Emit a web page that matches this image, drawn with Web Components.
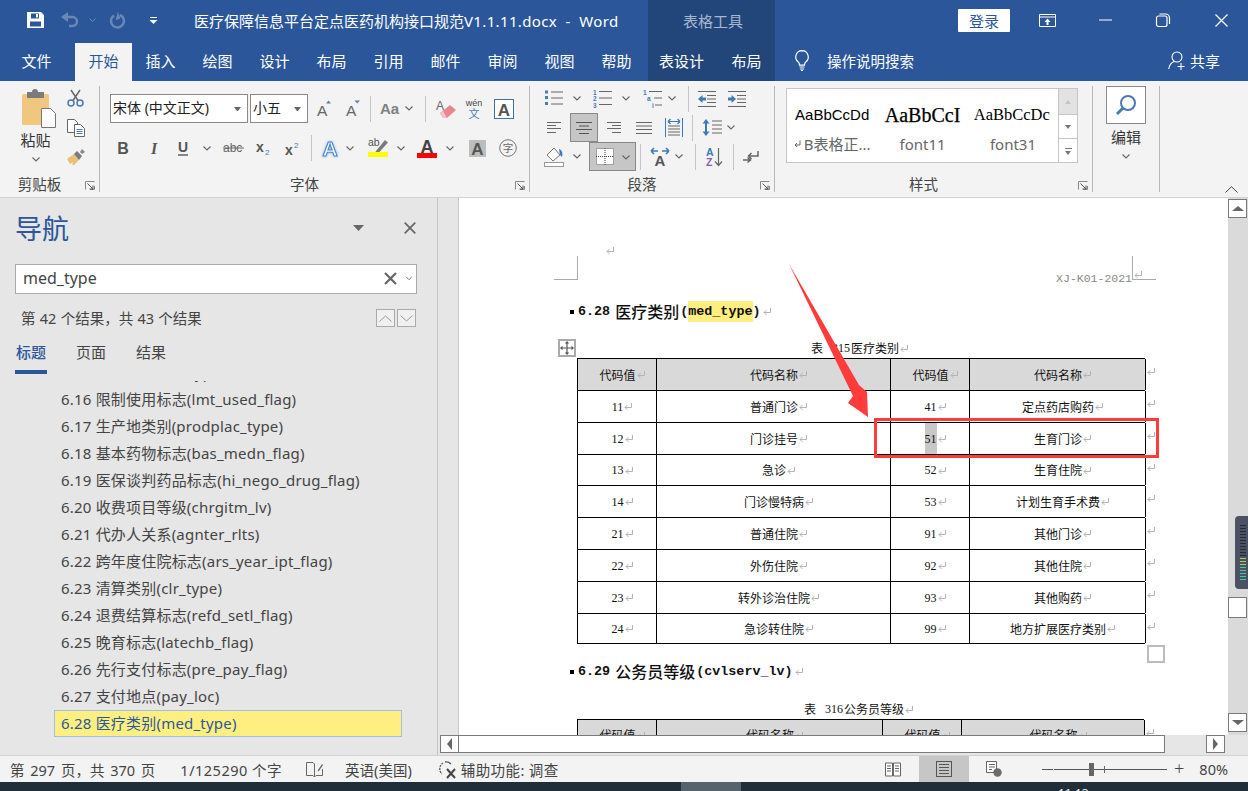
<!DOCTYPE html>
<html lang="zh">
<head>
<meta charset="utf-8">
<title>Word</title>
<style>
  html, body { margin: 0; padding: 0; background: #f3f3f3; }
  body { font-family: "Noto Sans", "Noto Sans CJK SC", sans-serif; overflow: hidden; }
</style>
</head>
<body>
<word-app>
  <title-bar></title-bar>
  <menu-tabs></menu-tabs>
  <ribbon-bar>
    <rb-group label="剪贴板" launcher style="width:100px"><clip-board></clip-board></rb-group>

    <rb-group label="字体" launcher style="width:430px">
      <rb-row style="height:29px;margin:8px 0 0 10px">
        <font-select w="138" text="宋体 (中文正文)"></font-select>
        <font-select w="58" text="小五" style="margin-left:2px"></font-select>
        <rb-tool w="30" i="grow"></rb-tool>
        <rb-tool w="30" i="shrink"></rb-tool>
        <rb-tool w="4" i="sep"></rb-tool>
        <rb-tool w="30" i="aa" style="margin-left:2px"></rb-tool>
        <rb-tool w="10" i="chev"></rb-tool>
        <rb-tool w="22" i="sep"></rb-tool>
        <rb-tool w="20" i="eraser"></rb-tool>
        <rb-tool w="35" i="wen"></rb-tool>
        <rb-tool w="26" i="boxa"></rb-tool>
      </rb-row>
      <rb-row style="height:28px;margin:11px 0 0 8px">
        <rb-tool w="30" i="bold"></rb-tool>
        <rb-tool w="32" i="italic"></rb-tool>
        <rb-tool w="26" i="under"></rb-tool>
        <rb-tool w="22" i="chev"></rb-tool>
        <rb-tool w="30" i="strike"></rb-tool>
        <rb-tool w="30" i="sub"></rb-tool>
        <rb-tool w="28" i="sup"></rb-tool>
        <rb-tool w="10" i="sep"></rb-tool>
        <rb-tool w="28" i="effect"></rb-tool>
        <rb-tool w="12" i="chev"></rb-tool>
        <rb-tool w="32" i="hilite" style="margin-left:6px"></rb-tool>
        <rb-tool w="14" i="chev"></rb-tool>
        <rb-tool w="32" i="color" style="margin-left:3px"></rb-tool>
        <rb-tool w="14" i="chev"></rb-tool>
        <rb-tool w="36" i="graya" style="margin-left:2px"></rb-tool>
        <rb-tool w="26" i="circle"></rb-tool>
      </rb-row>
    </rb-group>

    <rb-group label="段落" launcher style="width:245px">
      <rb-row style="height:21px;margin:2px 0 0 12px">
        <rb-tool w="24" i="bullets"></rb-tool>
        <rb-tool w="22" i="chev"></rb-tool>
        <rb-tool w="28" i="numbers"></rb-tool>
        <rb-tool w="20" i="chev"></rb-tool>
        <rb-tool w="32" i="multi"></rb-tool>
        <rb-tool w="8" i="chev"></rb-tool>
        <rb-tool w="14" i="sep" style="margin-left:5px"></rb-tool>
        <rb-tool w="24" i="dedent"></rb-tool>
        <rb-tool w="24" i="indent" style="margin-left:6px"></rb-tool>
      </rb-row>
      <rb-row style="height:29px;margin:4px 0 0 10px">
        <rb-tool w="28" i="left"></rb-tool>
        <rb-tool w="28" i="center" active style="margin-left:2px"></rb-tool>
        <rb-tool w="28" i="right" style="margin-left:2px"></rb-tool>
        <rb-tool w="28" i="just" style="margin-left:2px"></rb-tool>
        <rb-tool w="28" i="dist" style="margin-left:2px"></rb-tool>
        <rb-tool w="8" i="sep"></rb-tool>
        <rb-tool w="28" i="spacing" style="margin-left:2px"></rb-tool>
        <rb-tool w="10" i="chev"></rb-tool>
      </rb-row>
      <rb-row style="height:29px;margin:0 0 0 10px">
        <rb-tool w="28" i="shade"></rb-tool>
        <rb-tool w="18" i="chev"></rb-tool>
        <rb-tool w="47" i="borders" active style="margin-left:3px"></rb-tool>
        <rb-tool w="8" i="sep"></rb-tool>
        <rb-tool w="28" i="layout" style="margin-left:2px"></rb-tool>
        <rb-tool w="10" i="chev"></rb-tool>
        <rb-tool w="8" i="sep" style="margin-left:7px"></rb-tool>
        <rb-tool w="28" i="sort" style="margin-left:1px"></rb-tool>
        <rb-tool w="8" i="sep" style="margin-left:1px"></rb-tool>
        <rb-tool w="28" i="pilcrow"></rb-tool>
      </rb-row>
    </rb-group>

    <rb-group label="样式" launcher style="width:318px"><style-gallery></style-gallery></rb-group>
    <rb-group style="width:67px"><edit-button></edit-button></rb-group>
    <collapse-caret></collapse-caret>
  </ribbon-bar>

  <work-area>
    <nav-pane>
      <nav-item>6.15 目录类别(list_type)</nav-item>
      <nav-item>6.16 限制使用标志(lmt_used_flag)</nav-item>
      <nav-item>6.17 生产地类别(prodplac_type)</nav-item>
      <nav-item>6.18 基本药物标志(bas_medn_flag)</nav-item>
      <nav-item>6.19 医保谈判药品标志(hi_nego_drug_flag)</nav-item>
      <nav-item>6.20 收费项目等级(chrgitm_lv)</nav-item>
      <nav-item>6.21 代办人关系(agnter_rlts)</nav-item>
      <nav-item>6.22 跨年度住院标志(ars_year_ipt_flag)</nav-item>
      <nav-item>6.23 清算类别(clr_type)</nav-item>
      <nav-item>6.24 退费结算标志(refd_setl_flag)</nav-item>
      <nav-item>6.25 晚育标志(latechb_flag)</nav-item>
      <nav-item>6.26 先行支付标志(pre_pay_flag)</nav-item>
      <nav-item>6.27 支付地点(pay_loc)</nav-item>
      <nav-item active>6.28 医疗类别(med_type)</nav-item>
    </nav-pane>
    <doc-view>
      <page-header></page-header>
      <doc-heading num="6.28" zh="医疗类别" hit="med_type" style="margin-top:21px"></doc-heading>
      <doc-caption num="315" zh="医疗类别" style="margin:19px 0 0 352px"></doc-caption>
      <code-table cols="79 234 79 176" handle style="margin-top:3px">
        <code-row head a="代码值" b="代码名称" c="代码值" d="代码名称"></code-row>
        <code-row a="11" b="普通门诊" c="41" d="定点药店购药"></code-row>
        <code-row a="12" b="门诊挂号" c="51" d="生育门诊" mark></code-row>
        <code-row a="13" b="急诊" c="52" d="生育住院" h="31"></code-row>
        <code-row a="14" b="门诊慢特病" c="53" d="计划生育手术费"></code-row>
        <code-row a="21" b="普通住院" c="91" d="其他门诊"></code-row>
        <code-row a="22" b="外伤住院" c="92" d="其他住院"></code-row>
        <code-row a="23" b="转外诊治住院" c="93" d="其他购药"></code-row>
        <code-row a="24" b="急诊转住院" c="99" d="地方扩展医疗类别" h="31"></code-row>
      </code-table>
      <doc-heading num="6.29" zh="公务员等级" code="cvlserv_lv" style="margin-top:17px"></doc-heading>
      <doc-caption num="316" zh="公务员等级" style="margin:20px 0 0 345px"></doc-caption>
      <code-table cols="79 226 79 183" style="margin-top:3px">
        <code-row head a="代码值" b="代码名称" c="代码值" d="代码名称"></code-row>
      </code-table>
      <red-note></red-note>
    </doc-view>
  </work-area>
  <status-bar></status-bar>
  <task-strip></task-strip>
</word-app>

<script>
const CJK = '"Noto Sans CJK SC"';
const SANS = '"Liberation Sans"';
const SERIF = '"Liberation Serif"';

// [width, height, svg body]
const ICONS = {
  chev: [8, 5, `<path d="M.5.5 4 4 7.5.5" fill="none" stroke="#666" stroke-width="1.1"/>`],
  sep: [1, 26, `<path d="M.5 0v26" stroke="#c4c4c4"/>`],
  tri: [11, 6, `<path d="M0 0h11L5.500 6z" fill="#666"/>`],
  ret: [9, 9, `<path d="M7.500 1v4.500H1M3.500 3 1 5.500 3.500 8" fill="none" stroke="#b4b4b4"/>`],
  retd: [7, 8, `<path d="M6 .5v4.500H1M3 3 1 5l2 2" fill="none" stroke="#666"/>`],
  grow: [18, 18, `<text x="3" y="15.500" font-family=${SANS} font-size="15.500" fill="#666">A</text><path d="M12 3.500l2.500-3 2.500 3z" fill="#5b7fae"/>`],
  shrink: [18, 18, `<text x="2" y="15.500" font-family=${SANS} font-size="15.500" fill="#666">A</text><path d="M10.500.5h5.500l-2.750 3z" fill="#5b7fae"/>`],
  aa: [20, 16, `<text x="1" y="12.500" font-family=${SANS} font-size="15" font-weight="bold" fill="#808080">Aa</text>`],
  eraser: [21, 20, `<text x="0" y="11" font-family=${SANS} font-size="12" fill="#666">A</text><path d="M4 14 14 6l6 5-9 8H7z" fill="#ea8794"/><path d="M4 14l3 5h4l-4-7z" fill="#f4c3ca"/>`],
  wen: [18, 20, `<text x="9" y="7" text-anchor="middle" font-family=${SANS} font-size="9" fill="#444">wén</text><text x="9" y="19" text-anchor="middle" font-family=${CJK} font-size="11" fill="#4a7ab5">文</text>`],
  boxa: [20, 20, `<rect x=".5" y=".5" width="19" height="19" fill="#fff" stroke="#3f6fa8"/><text x="10" y="17" text-anchor="middle" font-family=${SANS} font-size="17" font-weight="bold" fill="#555">A</text>`],
  bold: [12, 14, `<text x="6" y="13" text-anchor="middle" font-family=${SANS} font-size="16" font-weight="bold" fill="#555">B</text>`],
  italic: [10, 14, `<text x="5" y="13" text-anchor="middle" font-family=${SERIF} font-size="16" font-weight="bold" font-style="italic" fill="#555">I</text>`],
  under: [12, 16, `<text x="6" y="12" text-anchor="middle" font-family=${SANS} font-size="14" font-weight="bold" fill="#555">U</text><path d="M1 15h10" stroke="#555" stroke-width="1.400"/>`],
  strike: [21, 12, `<text x="0" y="10" font-family=${SANS} font-size="12" fill="#666">abc</text><path d="M0 6h21" stroke="#666"/>`],
  sub: [15, 16, `<text x="0" y="12" font-family=${SANS} font-size="14" font-weight="bold" fill="#555">x</text><text x="9" y="15" font-family=${SANS} font-size="8" fill="#4a7ab5">2</text>`],
  sup: [15, 16, `<text x="0" y="15" font-family=${SANS} font-size="14" font-weight="bold" fill="#555">x</text><text x="9" y="8" font-family=${SANS} font-size="8" fill="#4a7ab5">2</text>`],
  effect: [18, 20, `<text x="9" y="18" text-anchor="middle" font-family=${SANS} font-size="21" font-weight="bold" fill="#fff" stroke="#4a86c8" stroke-width="1.100" style="filter:drop-shadow(0 0 1.500px #8fb8e6)">A</text>`],
  hilite: [22, 20, `<text x="1" y="8" font-family=${SANS} font-size="10.500" fill="#555">ab</text><path d="M9 13 18 2l3 2.500-9 10-4 .5z" fill="#7a7a7a"/><rect x="1" y="14" width="20" height="5" fill="#ff0"/>`],
  color: [20, 21, `<text x="10" y="14.500" text-anchor="middle" font-family=${SANS} font-size="18" font-weight="bold" fill="#444">A</text><rect y="15" width="20" height="5" fill="#f00"/>`],
  graya: [17, 17, `<rect width="17" height="17" fill="#bdbdbd"/><text x="8.500" y="15" text-anchor="middle" font-family=${SANS} font-size="17" font-weight="bold" fill="#555">A</text>`],
  circle: [18, 18, `<circle cx="9" cy="9" r="8.300" fill="none" stroke="#777"/><text x="9" y="13" text-anchor="middle" font-family=${CJK} font-size="10.500" fill="#666">字</text>`],
  bullets: [18, 17, `<path d="M0 1.500h3v3H0zM0 7h3v3H0zM0 13h3v3H0z" fill="#4a7ab5" transform="translate(0 -1)"/><path d="M6 2h12M6 8h12M6 14h12" stroke="#666"/>`],
  numbers: [19, 19, `<g font-family=${SANS} font-size="6.500" font-weight="bold" fill="#4a7ab5"><text x="0" y="6">1</text><text x="0" y="12">2</text><text x="0" y="19">3</text></g><path d="M6 2.500h13M6 9h13M6 15.500h13" stroke="#666"/>`],
  multi: [19, 19, `<g font-family=${SANS} font-size="6.500" font-weight="bold" fill="#4a7ab5"><text x="0" y="6">1</text><text x="4" y="12">a</text><text x="9" y="19">i</text></g><path d="M6 2.500h13M11 9h8M12 16h7" stroke="#666"/>`],
  dedent: [18, 16, `<path d="M0 .5h18M9 4.500h9M9 8h9M9 11.500h9M0 15.500h18" stroke="#666"/><path d="M0 8l4.500-4v2.500H8v3H4.500V12z" fill="#3f78bd"/>`],
  indent: [18, 16, `<path d="M0 .5h18M9 4.500h9M9 8h9M9 11.500h9M0 15.500h18" stroke="#666"/><path d="M8 8 3.500 4v2.500H0v3h3.500V12z" fill="#3f78bd"/>`],
  left: [14, 11, `<path d="M0 .5h14M0 3.500h9M0 6.500h14M0 10.500h9" stroke="#666"/>`],
  center: [16, 12, `<path d="M0 .5h16M3 4h10M0 7.500h16M3 11.500h10" stroke="#555"/>`],
  right: [14, 11, `<path d="M0 .5h14M5 3.500h9M0 6.500h14M5 10.500h9" stroke="#666"/>`],
  just: [16, 12, `<path d="M0 .5h16M0 4h16M0 7.500h16M0 11.500h16" stroke="#666"/>`],
  dist: [18, 19, `<path d="M.5 0v19M17.500 0v19" stroke="#3f78bd"/><path d="M3 8h12M3 11h12M3 14h12M3 17h12" stroke="#666"/><path d="M3 3.500h12M3 3.500l2.500-2.500M3 3.500 5.500 6M15 3.500 12.500 1M15 3.500 12.500 6" fill="none" stroke="#3f78bd" stroke-width="1.200"/>`],
  spacing: [20, 17, `<path d="M10 2h10M10 6h10M10 10h10M10 14h10" stroke="#666"/><path d="M4 0l3.500 4.500H5v8h2.500L4 17 .5 12.500H3v-8H.5z" fill="#3f78bd"/>`],
  shade: [20, 21, `<path d="M3 9 10 2l6 7-7 6z" fill="#fff" stroke="#777"/><path d="M15 3c3 1 4 4 3 8l-2-2z" fill="#3f78bd"/><rect x=".5" y="16.500" width="19" height="4" fill="#fff" stroke="#999"/>`],
  borders: [18, 17, `<rect width="18" height="17" fill="#fff"/><path d="M.5 .5h17v16H.5zM9 0v17M0 8.500h18" fill="none" stroke="#444" stroke-dasharray="1 1"/>`],
  layout: [20, 19, `<path d="M1 4h7M1 4l3-3M1 4l3 3M19 4h-7M19 4l-3-3M19 4l-3 3" fill="none" stroke="#3f78bd" stroke-width="1.500"/><text x="10" y="19" text-anchor="middle" font-family=${SANS} font-size="15" font-weight="bold" fill="#555">A</text>`],
  sort: [17, 20, `<text x="0" y="9" font-family=${SANS} font-size="10.500" font-weight="bold" fill="#3f78bd">A</text><text x="0" y="19" font-family=${SANS} font-size="10.500" font-weight="bold" fill="#8a5cab">Z</text><path d="M12.500 1v17M9 14.500l3.500 4 3.500-4" fill="none" stroke="#666" stroke-width="1.200"/>`],
  pilcrow: [16, 14, `<path d="M15 1v5H6M8.500 3 5.500 6l3 3" fill="none" stroke="#666" stroke-width="1.500"/><path d="M0 10h7M4.500 7.500 7.500 10l-3 2.500" fill="none" stroke="#666" stroke-width="1.500"/>`],
  launcher: [10, 9, `<path d="M.5.5h9M.5.5v8M9.500 5v3.500H5" fill="none" stroke="#888"/><path d="M2.500 2.500 8 8M8 4.500V8H4.500" fill="none" stroke="#555"/>`],
  paste: [36, 40, `<rect x="1" y="5" width="27" height="31" rx="1.500" fill="#efc77e"/><path d="M6 9V3h5a3 3 0 0 1 6 0h6v6z" fill="#7b7b7b"/><path d="M20.500 19.500h9l5 5v14h-14z" fill="#fff" stroke="#777"/>`],
  cut: [17, 18, `<circle cx="4" cy="14" r="3" fill="none" stroke="#4a7ab5" stroke-width="1.500"/><circle cx="13" cy="14" r="3" fill="none" stroke="#4a7ab5" stroke-width="1.500"/><path d="M6 11.500 13 1M11 11.500 4 1" stroke="#666" stroke-width="1.500"/>`],
  copy: [18, 18, `<path d="M.5.5h7l3 3v10H.5z" fill="#fff" stroke="#666"/><path d="M7.500 5.500h6l4 4v8h-10z" fill="#fff" stroke="#666"/><path d="M9.500 10.500h6M9.500 12.500h6M9.500 14.500h6" stroke="#4a7ab5"/>`],
  brush: [18, 16, `<path d="M0 10 7 5l5 6-5 5H5l1-3-3 2z" fill="#e9c07a"/><path d="M7 5l3-3 5 5-3 4z" fill="#7b7b7b"/><path d="M13 3l2-3 3 3-3 2z" fill="#888"/>`],
  search: [22, 22, `<circle cx="13" cy="9" r="7" fill="none" stroke="#4a7ab5" stroke-width="2"/><path d="M8 14 2 20" stroke="#4a7ab5" stroke-width="3"/>`],
  save: [17, 16, `<path fill="#fff" fill-rule="evenodd" d="M0 0h14l3 3v13H0zM4 1.500v5h8v-5zM3 9.500v5h11v-5z"/><path fill="#fff" d="M9 2h2v3.500H9z"/>`],
  undo: [18, 16, `<path d="M4 5h7.500a4.500 4.500 0 0 1 0 9H8" fill="none" stroke="#6b87b6" stroke-width="2.500"/><path d="M7 0v10L0 5z" fill="#6b87b6"/>`],
  redo: [16, 17, `<path d="M4 3.500a6.500 6.500 0 1 0 6-.5" fill="none" stroke="#6b87b6" stroke-width="2.500"/><path d="M9 0v7H4z" fill="#6b87b6" transform="rotate(-20 8 3)"/>`],
  wchev: [7, 4, `<path d="M.5.5 3.500 3.500 6.500.5" fill="none" stroke="#6b87b6"/>`],
  custom: [9, 7, `<path d="M1 .5h7" stroke="#fff"/><path d="M.5 3h8L4.500 7z" fill="#fff"/>`],
  display: [17, 13, `<path d="M.5.5h16v12H.5zM.5 3h16" fill="none" stroke="#fff"/><path d="M8.500 4.500 5.500 8h2v3h2V8h2z" fill="#fff"/>`],
  min: [13, 2, `<path d="M0 1h13" stroke="#fff"/>`],
  restore: [14, 14, `<rect x=".5" y="3" width="10.500" height="10.500" rx="2" fill="none" stroke="#fff" stroke-width="1.200"/><path d="M3.500 1h6a4 4 0 0 1 4 4v6" fill="none" stroke="#fff" stroke-width="1.200"/>`],
  close: [13, 13, `<path d="M.5.5l12 12M12.500.5l-12 12" stroke="#fff" stroke-width="1.300"/>`],
  bulb: [14, 21, `<path d="M7 .7a6.300 6.300 0 0 0-3.500 11.500c.7.600 1 1.500 1 3h5c0-1.500.3-2.400 1-3A6.300 6.300 0 0 0 7 .7z" fill="none" stroke="#fff" stroke-width="1.200"/><path d="M4.500 17h5M5 19h4M6 20.500h2" stroke="#fff"/>`],
  person: [18, 19, `<circle cx="9" cy="6" r="5" fill="none" stroke="#fff" stroke-width="1.100"/><path d="M.7 18c.5-4 3-6.500 5.500-7.500" fill="none" stroke="#fff" stroke-width="1.100"/><path d="M13 12v7M9.500 15.500h7" stroke="#fff" stroke-width="1.100"/>`],
  xdark: [13, 13, `<path d="M1 1l11 11M12 1 1 12" stroke="#666" stroke-width="2.200"/>`],
  xthin: [12, 12, `<path d="M.7.7l10.600 10.600M11.300.7.700 11.300" stroke="#666" stroke-width="1.700"/>`],
  up: [13, 7, `<path d="M.5 6.500 6.500 1l6 5.500" fill="none" stroke="#999"/>`],
  down: [13, 7, `<path d="M.5.5 6.500 6l6-5.500" fill="none" stroke="#999"/>`],
  movehandle: [14, 14, `<path d="M7 0 4.800 2.500h1.600v4H2.500V4.800L0 7l2.500 2.200V7.600h3.900v3.900H4.800L7 14l2.200-2.500H7.600V7.600h3.900v1.600L14 7l-2.500-2.200v1.600H7.600v-4h1.600z" fill="#555"/>`],
  book: [17, 15, `<path d="M.5.5H7l1.500 1.500v13L7 13.500H.5zM16.500 7v6.500H10l-1.500 1.500" fill="none" stroke="#666"/><path d="M12 8l4-6 1 1-4 6-1.500.5z" fill="#666"/>`],
  access: [20, 19, `<path d="M5 3A7 7 0 0 0 4 14" fill="none" stroke="#555" stroke-width="1.300" stroke-dasharray="2 1"/><path d="M7 2a7 7 0 0 1 6 2" fill="none" stroke="#555" stroke-width="1.300"/><path d="M9 9l8 9M17 9l-8 9" stroke="#444" stroke-width="2"/>`],
  read: [16, 15, `<path d="M.5 1h7v13h-7zM8.500 1h7v13h-7z" fill="#fff" stroke="#666"/><path d="M2 4h4M2 6.500h4M2 9h4M10 4h4M10 6.500h4M10 9h4" stroke="#666"/>`],
  print: [16, 16, `<rect x=".5" y=".5" width="15" height="15" fill="none" stroke="#555"/><path d="M3 3.500h10M3 6.500h10M3 9.500h10M3 12.500h10" stroke="#555"/>`],
  web: [16, 16, `<path d="M.5.5h10v11H.5z" fill="#fff" stroke="#666"/><path d="M3 3.500h6M3 6h6M3 8.500h3" stroke="#666"/><circle cx="11.500" cy="11.500" r="4.200" fill="#6b6b6b"/>`],
};

function ico(name) {
  const [w, h, body] = ICONS[name];
  return `<svg xmlns="http://www.w3.org/2000/svg" width="${w}" height="${h}" viewBox="0 0 ${w} ${h}" style="display:block;overflow:visible;flex:none">${body}</svg>`;
}

function tpl(html) {
  const t = document.createElement("template");
  t.innerHTML = html;
  return t;
}

class ShadowEl extends HTMLElement {
  constructor() {
    super();
    this.attachShadow({ mode: "open" });
    if (this.constructor.template) {
      this.shadowRoot.appendChild(this.constructor.template.content.cloneNode(true));
    }
  }
}

class WordApp extends ShadowEl {
  static template = tpl(`<style>
    :host { display: flex; flex-direction: column; width: 1248px; height: 791px; overflow: hidden; background: #f3f3f3; color: #444; font-family: "Noto Sans", "Noto Sans CJK SC", sans-serif; }
  </style><slot></slot>`);
}

class TitleBar extends ShadowEl {
  static template = tpl(`<style>
    :host { display: flex; align-items: center; height: 40px; background: #2b579a; color: #fff; font-size: 15px; flex: none; }
    .ctx { width: 127px; height: 40px; margin-left: 28px; padding-left: 3px; box-sizing: border-box; background: #23467a; display: flex; align-items: center; justify-content: center; color: #a7b7cf; }
    .title { width: 426px; margin-left: 36px; white-space: pre; }
    .title i { font-style: normal; letter-spacing: .35px; }
    .login { width: 52px; height: 23px; margin-left: 183px; background: #fff; color: #2b579a; border-radius: 1px; display: flex; align-items: center; justify-content: center; }
    span { display: block; }
  </style>
  <span style="margin-left:27px">${ico("save")}</span>
  <span style="margin-left:17px">${ico("undo")}</span>
  <span style="margin-left:10px">${ico("wchev")}</span>
  <span style="margin-left:14px">${ico("redo")}</span>
  <span style="margin-left:23px">${ico("custom")}</span>
  <div class="title">医疗保障信息平台定点医药机构接口规范<i>V1.1.11.docx  -  Word</i></div>
  <div class="ctx">表格工具</div>
  <div class="login">登录</div>
  <span style="margin-left:29px">${ico("display")}</span>
  <span style="margin-left:43px">${ico("min")}</span>
  <span style="margin-left:44px">${ico("restore")}</span>
  <span style="margin-left:45px">${ico("close")}</span>`);
}

class MenuTabs extends ShadowEl {
  static template = tpl(`<style>
    :host { display: flex; height: 41px; background: #2b579a; color: #fff; font-size: 15px; flex: none; }
    .t { width: 57px; display: flex; align-items: center; justify-content: center; padding-bottom: 1px; box-sizing: border-box; }
    .on { background: #f3f3f3; color: #2b579a; margin-top: 3px; height: 38px; padding-bottom: 4px; }
    .ctx { display: flex; background: #23467a; margin-left: 3px; width: 127px; }
    .ctx .t:first-child { width: 67px; }
    .ctx .t:last-child { width: 60px; padding-left: 3px; }
    .tell { display: flex; align-items: center; margin-left: 20px; padding-bottom: 1px; }
    .share { display: flex; align-items: center; margin-left: 254px; padding-bottom: 1px; }
  </style>
  <div class="t" style="margin-left:8px">文件</div>
  <div class="t on" style="margin-left:10px">开始</div>
  <div class="t">插入</div><div class="t">绘图</div><div class="t">设计</div><div class="t">布局</div>
  <div class="t">引用</div><div class="t">邮件</div><div class="t">审阅</div><div class="t">视图</div><div class="t">帮助</div>
  <div class="ctx"><div class="t">表设计</div><div class="t">布局</div></div>
  <div class="tell">${ico("bulb")}<span style="margin-left:18px;font-size:14.5px">操作说明搜索</span></div>
  <div class="share">${ico("person")}<span style="margin-left:4px">共享</span></div>`);
}

class RibbonBar extends ShadowEl {
  static template = tpl(`<style>
    :host { display: flex; height: 117px; box-sizing: border-box; background: #f3f3f3; border-bottom: 1px solid #d2d2d2; flex: none; }
  </style><slot></slot>`);
}

class RbGroup extends ShadowEl {
  static template = tpl(`<style>
    :host { display: flex; flex-direction: column; box-sizing: border-box; height: 106px; margin-top: 5px; border-right: 1px solid #b8b8b8; flex: none; }
    .body { flex: 1; min-height: 0; display: flex; flex-direction: column; }
    .foot { height: 16px; display: flex; align-items: center; font-size: 14.5px; color: #444; }
    .label { flex: 1; text-align: center; line-height: 16px; }
    .launch { width: 20px; padding-left: 6px; box-sizing: border-box; margin-top: 3px; }
  </style><div class="body"><slot></slot></div><div class="foot"></div>`);
  connectedCallback() {
    const foot = this.shadowRoot.querySelector(".foot");
    if (this.hasAttribute("label")) {
      foot.innerHTML = `<div class="label">${this.getAttribute("label")}</div><div class="launch">${ico("launcher")}</div>`;
    }
  }
}

class RbRow extends ShadowEl {
  static template = tpl(`<style>:host { display: flex; align-items: center; flex: none; }</style><slot></slot>`);
}

class RbTool extends ShadowEl {
  connectedCallback() {
    const name = this.getAttribute("i");
    let inner = ico(name);
    if (name === "borders") {
      inner = `<span style="display:flex;align-items:center;gap:8px">${ico("borders")}<span style="margin-top:1px">${ico("chev")}</span></span>`;
    }
    this.shadowRoot.innerHTML = `<style>
      :host { display: flex; align-items: center; justify-content: center; width: ${this.getAttribute("w")}px; height: 100%; box-sizing: border-box; flex: none; }
      :host([active]) { background: #c6c6c6; border: 1px solid #888; }
    </style>${inner}`;
  }
}

class FontSelect extends ShadowEl {
  connectedCallback() {
    this.shadowRoot.innerHTML = `<style>
      :host { display: flex; align-items: center; box-sizing: border-box; width: ${this.getAttribute("w")}px; height: 29px; background: #fff; border: 1px solid #8a8a8a; padding: 0 6px 3px 2px; color: #222; font-size: 14px; flex: none; white-space: nowrap; }
      .v { flex: 1; }
      .c { width: 7px; height: 0; border: 3.5px solid transparent; border-top: 4px solid #666; border-bottom: 0; box-sizing: border-box; margin-top: 3px; }
    </style><span class="v">${this.getAttribute("text")}</span><span class="c"></span>`;
  }
}

class ClipBoard extends ShadowEl {
  static template = tpl(`<style>
    :host { display: flex; flex: none; }
    .l { width: 67px; display: flex; flex-direction: column; align-items: center; padding: 3px 0 0 5px; box-sizing: border-box; }
    .l > svg { margin-left: 6px; }
    .t { font-size: 15px; color: #333; line-height: 20px; margin-top: 1px; margin-right: 1px; }
    .c { margin-top: 7px; }
    .r { display: flex; flex-direction: column; padding-top: 3px; gap: 12px; }
  </style>
  <div class="l">${ico("paste")}<div class="t">粘贴</div><div class="c">${ico("chev")}</div></div>
  <div class="r">${ico("cut")}${ico("copy")}${ico("brush")}</div>`);
}

class StyleGallery extends ShadowEl {
  static template = tpl(`<style>
    :host { display: flex; box-sizing: border-box; width: 292px; height: 75px; margin: 2px 0 0 11px; background: #fff; border: 1px solid #c6c6c6; flex: none; }
    .cell { width: 91px; padding: 13px 4px 0; box-sizing: border-box; text-align: center; overflow: hidden; white-space: nowrap; }
    .s { height: 26px; line-height: 26px; overflow: hidden; color: #000; }
    .s1 { font-family: ${SANS}; font-size: 15px; }
    .s2 { font-family: ${SERIF}; font-size: 20px; -webkit-text-stroke: .25px #000; }
    .s3 { font-family: ${SERIF}; font-size: 16.5px; text-align: left; margin: 0 4px 0 2px; }
    .n { margin-top: 6px; line-height: 20px; font-size: 15px; color: #666; display: flex; align-items: center; justify-content: center; gap: 3px; }
    .bar { width: 18px; display: flex; flex-direction: column; border-left: 1px solid #c6c6c6; }
    .bar div { display: flex; align-items: center; justify-content: center; box-sizing: border-box; }
    .tr { width: 0; height: 0; border: 3.5px solid transparent; border-top: 4px solid #777; border-bottom: 0; }
    .u { width: 0; height: 0; border: 3.5px solid transparent; border-bottom: 4px solid #c4c4c4; border-top: 0; }
    .b1 { height: 25px; background: #e2e2e2; }
    .b2 { height: 24px; border-top: 1px solid #c6c6c6; }
    .b3 { height: 24px; border-top: 1px solid #c6c6c6; flex-direction: column; gap: 2px; padding-top: 1px; }
    .ln { width: 7px; height: 1px; background: #777; }
  </style>
  <div class="cell"><div class="s s1">AaBbCcDd</div><div class="n">${ico("retd")}B表格正...</div></div>
  <div class="cell"><div class="s s2">AaBbCcI</div><div class="n">font11</div></div>
  <div class="cell"><div class="s s3">AaBbCcDc</div><div class="n">font31</div></div>
  <div class="bar">
    <div class="b1"><span class="u"></span></div>
    <div class="b2"><span class="tr"></span></div>
    <div class="b3"><span class="ln"></span><span class="tr"></span></div>
  </div>`);
}

class EditButton extends ShadowEl {
  static template = tpl(`<style>
    :host { display: flex; flex-direction: column; align-items: center; width: 40px; margin-left: 13px; font-size: 15px; color: #333; }
    .b { width: 40px; height: 38px; box-sizing: border-box; background: #fff; border: 1px solid #8a8a8a; display: flex; align-items: center; justify-content: center; }
    .t { line-height: 20px; margin-top: 3px; }
    .c { margin-top: 7px; }
  </style><div class="b">${ico("search")}</div><div class="t">编辑</div><div class="c">${ico("chev")}</div>`);
}

class CollapseCaret extends ShadowEl {
  static template = tpl(`<style>
    :host { display: block; margin: 105px 0 0 65px; height: 6px; }
  </style><svg width="13" height="7" viewBox="0 0 13 7" style="display:block"><path d="M.5 6.500 6.500.7l6 5.800" fill="none" stroke="#444"/></svg>`);
}

class WorkArea extends ShadowEl {
  static template = tpl(`<style>:host { display: flex; height: 557px; flex: none; }</style><slot></slot>`);
}

class NavPane extends ShadowEl {
  static template = tpl(`<style>
    :host { display: flex; flex-direction: column; box-sizing: border-box; width: 438px; background: #e6e6e6; border-right: 1px solid #c6c6c6; color: #444; flex: none; }
    .head { display: flex; align-items: center; height: 30px; margin: 15px 0 0 15px; }
    .head h1 { margin: 0; font: 400 27px/30px "Noto Sans CJK SC", sans-serif; color: #2b579a; width: 338px; }
    .search { display: flex; align-items: center; box-sizing: border-box; width: 402px; height: 30px; margin: 21px 0 0 15px; background: #fff; border: 1px solid #aaa; font-size: 16px; padding: 0 3px 2px 7px; color: #444; }
    .search span:first-child { flex: 1; }
    .count { display: flex; align-items: center; height: 18px; margin: 15px 0 0 21px; font-size: 14.5px; }
    .count .n { width: 355px; word-spacing: .5px; margin-top: -2px; }
    .arrow { width: 19px; height: 18px; box-sizing: border-box; background: #f0f0f0; border: 1px solid #aaa; display: flex; align-items: center; justify-content: center; margin-right: 2px; }
    .tabs { display: flex; gap: 30px; margin: 15px 0 0 16px; font-size: 15px; line-height: 20px; }
    .tabs .on { color: #2b579a; font-weight: 500; }
    .under { width: 32px; height: 4px; margin: 8px 0 0 15px; background: #2b579a; }
    .list { height: 360px; margin-top: 7px; overflow: hidden; }
    .inner { margin-top: -22px; }
  </style>
  <div class="head"><h1>导航</h1><span>${ico("tri")}</span><span style="margin-left:40px">${ico("xthin")}</span></div>
  <div class="search"><span>med_type</span><span>${ico("xdark")}</span><span style="margin-left:8px;transform:scale(.8)">${ico("chev")}</span></div>
  <div class="count"><span class="n">第 42 个结果，共 43 个结果</span><span class="arrow">${ico("up")}</span><span class="arrow">${ico("down")}</span></div>
  <div class="tabs"><span class="on">标题</span><span>页面</span><span>结果</span></div>
  <div class="under"></div>
  <div class="list"><div class="inner"><slot></slot></div></div>`);
}

class NavItem extends ShadowEl {
  static template = tpl(`<style>
    :host { display: block; height: 27px; line-height: 27px; padding-left: 61px; font-size: 15px; letter-spacing: .2px; color: #444; white-space: nowrap; }
    :host([active]) { width: 348px; box-sizing: border-box; margin-left: 54px; padding-left: 7px; background: #ffef80; color: #2b579a; box-shadow: 0 0 0 1px #9ec0e8 inset; }
  </style><slot></slot>`);
}

class DocView extends ShadowEl {
  static template = tpl(`<style>
    :host { display: grid; grid-template-columns: 21px 769px 20px; grid-template-rows: 537px 20px; width: 810px; background: #e6e6e6; flex: none; position: relative; }
    .gutter { border-right: 1px solid #c6c6c6; }
    .page { background: #fff; overflow: hidden; position: relative; display: flex; flex-direction: column; align-items: flex-start; }
    .v { background: #dadada; display: flex; flex-direction: column; }
    .btn { width: 19px; height: 19px; box-sizing: border-box; background: #fff; border: 1px solid #7a7a7a; display: flex; align-items: center; justify-content: center; flex: none; }
    .thumb { width: 19px; height: 21px; box-sizing: border-box; background: #fff; border: 1px solid #7a7a7a; margin-top: 379px; }
    .up { width: 0; height: 0; border: 6px solid transparent; border-bottom: 5px solid #666; border-top: 0; }
    .dn { width: 0; height: 0; border: 6px solid transparent; border-top: 5px solid #666; border-bottom: 0; }
    .lf { width: 0; height: 0; border: 6px solid transparent; border-right: 5px solid #666; border-left: 0; }
    .rt { width: 0; height: 0; border: 6px solid transparent; border-left: 5px solid #666; border-right: 0; }
    .h { grid-column: 1 / 4; display: flex; padding: 0 0 2px 2px; }
    .h .btn { height: 18px; }
    .track { width: 706px; height: 18px; box-sizing: border-box; background: #fff; border: 1px solid #7a7a7a; border-left: 0; }
    .meter { position: absolute; right: 0; top: 318px; width: 13px; height: 73px; box-sizing: border-box; border-radius: 4px 0 0 4px; background: #4c5263; padding: 9px 2px 7px 5px; }
    .meter div { height: 100%; background: repeating-linear-gradient(#0000 0 1px, #4c5263 1px 3px), linear-gradient(#262a34 0 56%, #a9cf58 56% 72%, #45c8a4 72%); }
  </style>
  <div class="gutter"></div>
  <div class="page"><slot></slot></div>
  <div class="v"><div class="btn" style="margin-top:1px"><span class="up"></span></div><div class="thumb"></div><div class="btn" style="margin-top:95px"><span class="dn"></span></div></div>
  <div class="h"><div class="btn" style="width:19px"><span class="lf"></span></div><div class="track"></div><div class="btn" style="width:19px;margin-left:41px"><span class="rt"></span></div></div>
  <div class="meter"><div></div></div>`);
}

class PageHeader extends ShadowEl {
  static template = tpl(`<style>
    :host { display: flex; box-sizing: border-box; width: 100%; height: 24px; margin-top: 58px; padding: 0 72px 0 95px; flex: none; }
    .crop { width: 24px; height: 24px; box-sizing: border-box; border-bottom: 1px solid #aaa; flex: none; }
    .mark { margin: -10px 0 0 28px; height: 9px; }
    .code { margin: auto 0 -6px auto; font: 11.5px/14px "Liberation Mono", monospace; color: #888; }
    .r { border-left: 1px solid #aaa; display: flex; align-items: flex-end; padding: 0 0 0 1px; }
  </style>
  <div class="crop" style="border-right:1px solid #aaa"></div>
  <div class="mark">${ico("ret")}</div>
  <div class="code">XJ-K01-2021</div>
  <div class="crop r">${ico("ret")}</div>`);
}

class DocHeading extends ShadowEl {
  connectedCallback() {
    const hit = this.getAttribute("hit");
    const code = hit ? `<mark>${hit}</mark>` : this.getAttribute("code");
    this.shadowRoot.innerHTML = `<style>
      :host { display: flex; align-items: center; height: 21px; margin-left: 111px; color: #111; font: bold 13.4px/21px "Liberation Mono", monospace; white-space: nowrap; flex: none; }
      .sq { width: 4px; height: 4px; background: #000; margin-right: 4px; }
      .zh { font: 500 16px/21px "Noto Sans CJK SC", sans-serif; margin: 0 1px 0 5px; }
      mark { background: #ffef80; color: inherit; padding: 0; display: block; }
      .m { margin-left: 2px; }
    </style><span class="sq"></span>${this.getAttribute("num")}<span class="zh">${this.getAttribute("zh")}</span>(${code})<span class="m">${ico("ret")}</span>`;
  }
}

class DocCaption extends ShadowEl {
  connectedCallback() {
    this.shadowRoot.innerHTML = `<style>
      :host { display: flex; align-items: center; height: 14px; color: #111; font: 12px/14px ${CJK}, sans-serif; white-space: nowrap; flex: none; }
      .n { font-family: ${SERIF}; margin: 0 1px 0 9px; }
      .m { margin-left: 1px; }
    </style><span>表</span><span class="n">${this.getAttribute("num")}</span><span>${this.getAttribute("zh")}</span><span class="m">${ico("ret")}</span>`;
  }
}

class CodeTable extends ShadowEl {
  connectedCallback() {
    const cols = this.getAttribute("cols").split(" ").map(n => n + "px").join(" ");
    const handle = this.hasAttribute("handle") ? `<div class="handle">${ico("movehandle")}</div><div class="end"></div>` : "";
    this.shadowRoot.innerHTML = `<style>
      :host { display: block; position: relative; margin-left: 118px; --cols: ${cols}; flex: none; }
      .handle { position: absolute; left: -19px; top: -19px; width: 18px; height: 18px; box-sizing: border-box; border: 2px solid #aaa; background: #fff; display: flex; align-items: center; justify-content: center; }
      .end { position: absolute; left: 570px; bottom: -19px; width: 18px; height: 18px; box-sizing: border-box; border: 2px solid #bbb; background: #fff; }
    </style>${handle}<slot></slot>`;
  }
}

class CodeRow extends ShadowEl {
  connectedCallback() {
    const m = ico("ret");
    const isHead = this.hasAttribute("head");
    const num = v => /^\d+$/.test(v) ? `<span class="n">${v}</span>` : v;
    const markC = this.hasAttribute("mark");
    const cell = (v, sel) => `<div class="c">${sel ? `<span class="sel">${num(v)}</span>` : num(v)}<span class="m">${m}</span></div>`;
    const h = this.getAttribute("h") || 32;
    this.shadowRoot.innerHTML = `<style>
      :host { display: grid; position: relative; grid-template-columns: var(--cols); width: max-content; height: ${h}px; box-sizing: border-box; border-top: 1px solid #000; font: 12px/14px ${CJK}, sans-serif; color: #111; }
      .c { display: flex; align-items: center; justify-content: center; box-sizing: border-box; border-left: 1px solid #000; height: 100%; padding-left: 11px; ${isHead ? "background:#d9d9d9;" : ""} }
      .n { font-family: ${SERIF}; }
      .sel { background: #c8c8c8; align-self: stretch; display: flex; align-items: center; }
      .m { margin-left: 1px; }
      .edge { width: 1px; background: #000; height: 100%; position: absolute; left: 100%; top: 0; }
      .rm { position: absolute; left: calc(100% + 2px); top: 8px; }
    </style>${cell(this.getAttribute("a"))}${cell(this.getAttribute("b"))}${cell(this.getAttribute("c"), markC)}${cell(this.getAttribute("d"))}<span class="edge"></span><span class="rm">${m}</span>`;
    if (!this.nextElementSibling) this.style.borderBottom = "1px solid #000";
  }
}

class RedNote extends ShadowEl {
  static template = tpl(`<style>
    :host { position: absolute; left: 0; top: 0; width: 769px; height: 537px; pointer-events: none; }
    .box { position: absolute; left: 415px; top: 220px; width: 285px; height: 40px; box-sizing: border-box; border: 3px solid #ff3b3b; }
    svg { position: absolute; left: 0; top: 0; }
  </style>
  <svg width="769" height="537" viewBox="459 198 769 537"><path d="M789 264 859 385 867 392 868 417 848 403 853 396z" fill="#ff3b3b"/></svg>
  <div class="box"></div>`);
}

class StatusBar extends ShadowEl {
  static template = tpl(`<style>
    :host { display: flex; align-items: center; height: 27px; box-sizing: border-box; padding-right: 20px; background: #f3f3f3; border-top: 1px solid #d2d2d2; font-size: 14.5px; color: #444; white-space: nowrap; flex: none; }
    .i { display: flex; align-items: center; }
    .on { width: 50px; height: 26px; background: #c6c6c6; display: flex; align-items: center; justify-content: center; margin-left: 18px; }
    .line { width: 113px; height: 1px; background: #555; margin-left: 1px; position: relative; }
    .line i { position: absolute; left: 35px; top: -6px; width: 5px; height: 13px; background: #666; }
    .line b { position: absolute; left: 50px; top: -3px; width: 1px; height: 7px; background: #666; }
  </style>
  <span style="margin-left:10px;word-spacing:2px">第 297 页，共 370 页</span>
  <span style="margin-left:25px;letter-spacing:.5px">1/125290 个字</span>
  <span class="i" style="margin-left:24px">${ico("book")}</span>
  <span style="margin-left:22px">英语(美国)</span>
  <span class="i" style="margin-left:26px">${ico("access")}</span>
  <span style="margin-left:3px;letter-spacing:.4px">辅助功能: 调查</span>
  <span class="i" style="margin-left:auto">${ico("read")}</span>
  <span class="on">${ico("print")}</span>
  <span class="i" style="margin-left:17px">${ico("web")}</span>
  <span style="margin-left:40px;width:11px;height:1px;background:#555"></span>
  <span class="line"><i></i><b></b></span>
  <span style="margin-left:7px;font-size:18px;line-height:18px;margin-top:-2px;font-weight:300">+</span>
  <span style="margin-left:15px">80%</span>`);
}

class TaskStrip extends ShadowEl {
  static template = tpl(`<style>
    :host { display: flex; height: 9px; background: #1f2e38; overflow: hidden; flex: none; color: #eee; font: 12px/14px "Noto Sans", sans-serif; }
    .hi { width: 60px; margin-left: 681px; background: #56626c; }
    .clock { margin: 5px 0 0 317px; }
  </style><div class="hi"></div><div class="clock">11:13</div>`);
}

customElements.define("word-app", WordApp);
customElements.define("title-bar", TitleBar);
customElements.define("menu-tabs", MenuTabs);
customElements.define("ribbon-bar", RibbonBar);
customElements.define("rb-group", RbGroup);
customElements.define("rb-row", RbRow);
customElements.define("rb-tool", RbTool);
customElements.define("font-select", FontSelect);
customElements.define("clip-board", ClipBoard);
customElements.define("style-gallery", StyleGallery);
customElements.define("edit-button", EditButton);
customElements.define("collapse-caret", CollapseCaret);
customElements.define("work-area", WorkArea);
customElements.define("nav-pane", NavPane);
customElements.define("nav-item", NavItem);
customElements.define("doc-view", DocView);
customElements.define("page-header", PageHeader);
customElements.define("doc-heading", DocHeading);
customElements.define("doc-caption", DocCaption);
customElements.define("code-table", CodeTable);
customElements.define("code-row", CodeRow);
customElements.define("red-note", RedNote);
customElements.define("status-bar", StatusBar);
customElements.define("task-strip", TaskStrip);
</script>
</body>
</html>
